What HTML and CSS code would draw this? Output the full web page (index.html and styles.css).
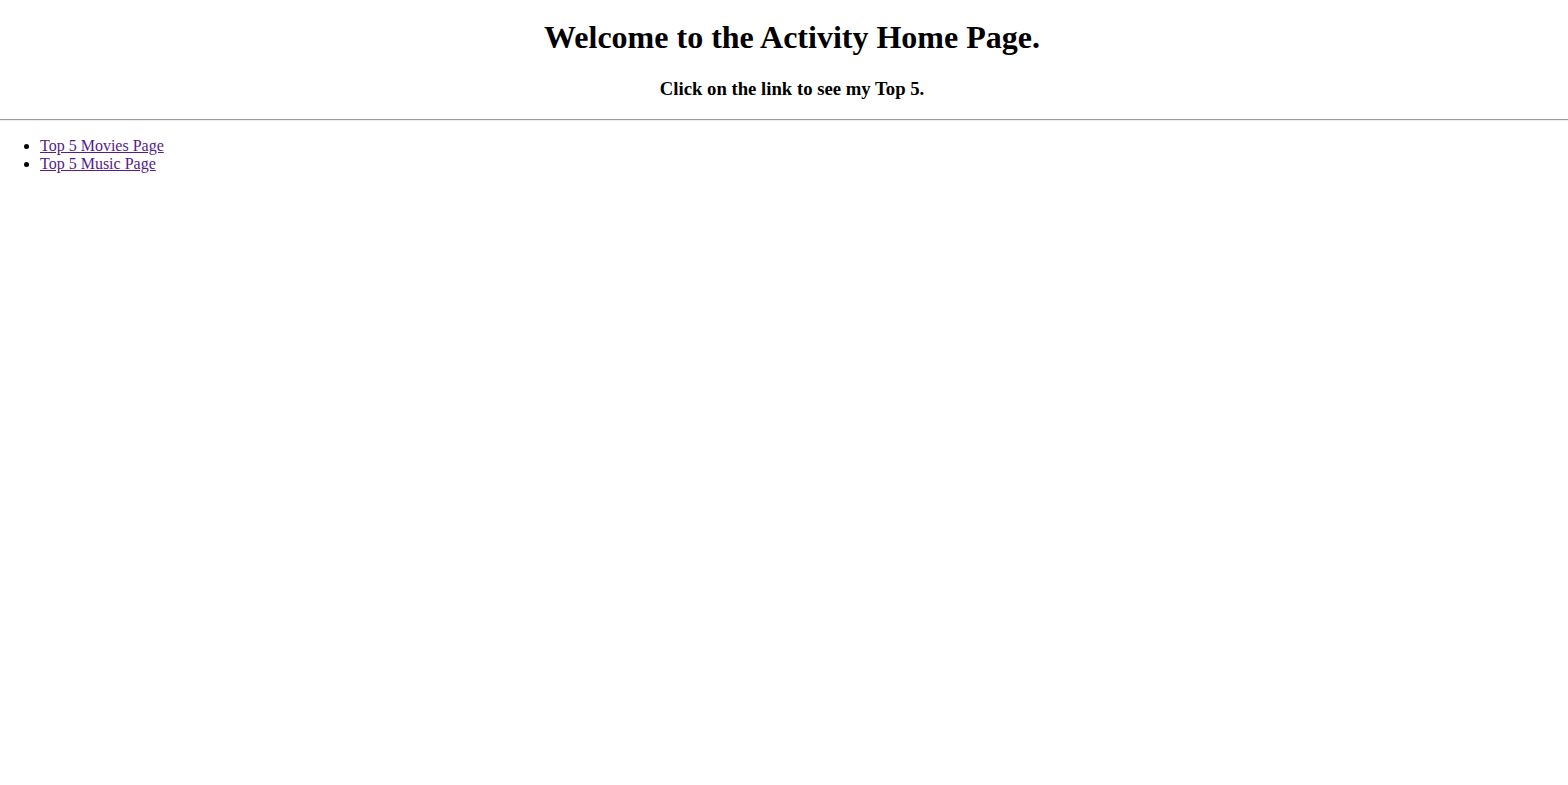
FILE: index.html
```html
<!DOCTYPE html>
<html lang="en">
<head>
<meta charset="utf-8">
<title>Activity Home Page</title>
<link rel="stylesheet" href="styles.css">
</head>
<body class="page">
<header class="intro">
<h1 class="title">Welcome to the Activity Home Page.</h1>
<h3 class="subtitle">Click on the link to see my Top 5.</h3>
</header>
<hr class="divider">
<ul class="links">
<li class="links-item"><a class="link" href="#movies">Top 5 Movies Page</a></li>
<li class="links-item"><a class="link" href="#music">Top 5 Music Page</a></li>
</ul>
</body>
</html>
```
FILE: styles.css
```css
html {
  background: #ffffff;
}

.page {
  margin: 0;
  font-family: "Liberation Serif", "Times New Roman", serif;
  font-size: 16px;
  color: #000000;
}

.intro {
  text-align: center;
  padding: 1px 0 0 16px;
}

.title {
  font-size: 32px;
  font-weight: bold;
  margin: 18.44px 0 21.44px;
}

.subtitle {
  font-size: 18.72px;
  font-weight: bold;
  margin: 18.72px 0;
}

.divider {
  margin: 8px 0;
  border: 0;
  border-top: 1px solid #9a9a9a;
  border-bottom: 1px solid #eeeeee;
  height: 0;
}

.links {
  margin: 16px 0;
  padding-left: 40px;
  list-style: disc;
}

.link {
  color: #551a8b;
  text-decoration: underline;
}
```
